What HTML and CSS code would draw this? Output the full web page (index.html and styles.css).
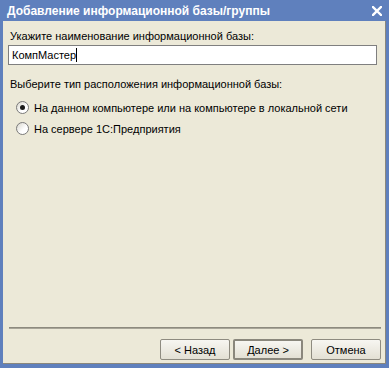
FILE: index.html
```html
<!DOCTYPE html>
<html lang="ru">
<head>
  <meta charset="UTF-8">
  <title>Добавление информационной базы/группы</title>
  <link rel="stylesheet" href="styles.css">
</head>
<body>
  <div class="window">
    <div class="titlebar">
      <span class="title">Добавление информационной базы/группы</span>
      <svg class="close" width="10" height="10" viewBox="0 0 10 10">
        <path d="M1 1 L9 9 M9 1 L1 9" stroke="#fff" stroke-width="2.4" stroke-linecap="square"/>
      </svg>
    </div>
    <div class="client">
      <div class="label first">Укажите наименование информационной базы:</div>
      <div class="input">КомпМастер<span class="caret"></span></div>

      <div class="label second">Выберите тип расположения информационной базы:</div>
      <div class="radio">
        <span class="circle checked"></span>
        <span>На данном компьютере или на компьютере в локальной сети</span>
      </div>
      <div class="radio">
        <span class="circle"></span>
        <span>На сервере 1С:Предприятия</span>
      </div>

      <div class="spacer"></div>

      <div class="separator"></div>
      <div class="buttons">
        <button>&lt; Назад</button>
        <button class="default">Далее &gt;</button>
        <button class="cancel">Отмена</button>
      </div>
    </div>
  </div>
</body>
</html>
```

FILE: styles.css
```css
body {
  margin: 0;
  font-family: "Liberation Sans", Arial, sans-serif;
  font-size: 11px;
  color: #000;
}
.window {
  width: 389px;
  height: 368px;
  background-color: #5f80bd;
  display: flex;
  flex-direction: column;
  box-sizing: border-box;
}
.titlebar {
  height: 21px;
  display: flex;
  align-items: center;
  justify-content: space-between;
  padding: 0 7px 0 7px;
  color: #fff;
}
.title {
  font-weight: bold;
  font-size: 12px;
}
.close {
  margin-top: 1px;
}
.client {
  flex: 1;
  margin: 0 3px 4px 3px;
  background-color: #ece9d8;
  border-right: 1px solid #8a877c;
  border-bottom: 1px solid #8a877c;
  display: flex;
  flex-direction: column;
  padding: 0 5px 0 5px;
}
.label {
  margin-left: 2px;
  line-height: 13px;
}
.label.first {
  margin-top: 9px;
  margin-bottom: 2px;
}
.input {
  height: 18px;
  line-height: 18px;
  border: 1px solid #7f7f7f;
  background-color: #fff;
  padding-left: 3px;
  margin-right: 3px;
  display: flex;
  align-items: center;
}
.caret {
  width: 1px;
  height: 14px;
  background-color: #000;
}
.label.second {
  margin-top: 13px;
  margin-bottom: 9px;
}
.radio {
  display: flex;
  align-items: center;
  height: 15px;
  margin-left: 8px;
  margin-bottom: 6px;
  gap: 5px;
}
.circle {
  width: 11px;
  height: 11px;
  border: 1px solid #7a7a7a;
  border-radius: 50%;
  background: linear-gradient(135deg, #d8d6cc 0%, #ffffff 60%);
  display: flex;
  align-items: center;
  justify-content: center;
}
.circle.checked::after {
  content: "";
  width: 5px;
  height: 5px;
  border-radius: 50%;
  background-color: #1a1a1a;
}
.spacer {
  flex: 1;
}
.separator {
  margin-left: 1px;
  margin-right: -1px;
  height: 1px;
  border-top: 1px solid #8d8a7e;
  background-color: #a8a598;
}
.buttons {
  display: flex;
  justify-content: flex-end;
  margin-top: 10px;
  margin-bottom: 3px;
  margin-right: -1px;
}
button {
  width: 70px;
  height: 21px;
  font-family: "Liberation Sans", Arial, sans-serif;
  font-size: 11px;
  color: #000;
  background: linear-gradient(#f7f6f1, #e3e0d4);
  border: 1px solid #8e8b80;
  border-radius: 2px;
  margin-left: 3px;
  padding: 0;
}
button.default {
  border: 2px solid #8a877c;
}
button.cancel {
  margin-left: 8px;
}
```
